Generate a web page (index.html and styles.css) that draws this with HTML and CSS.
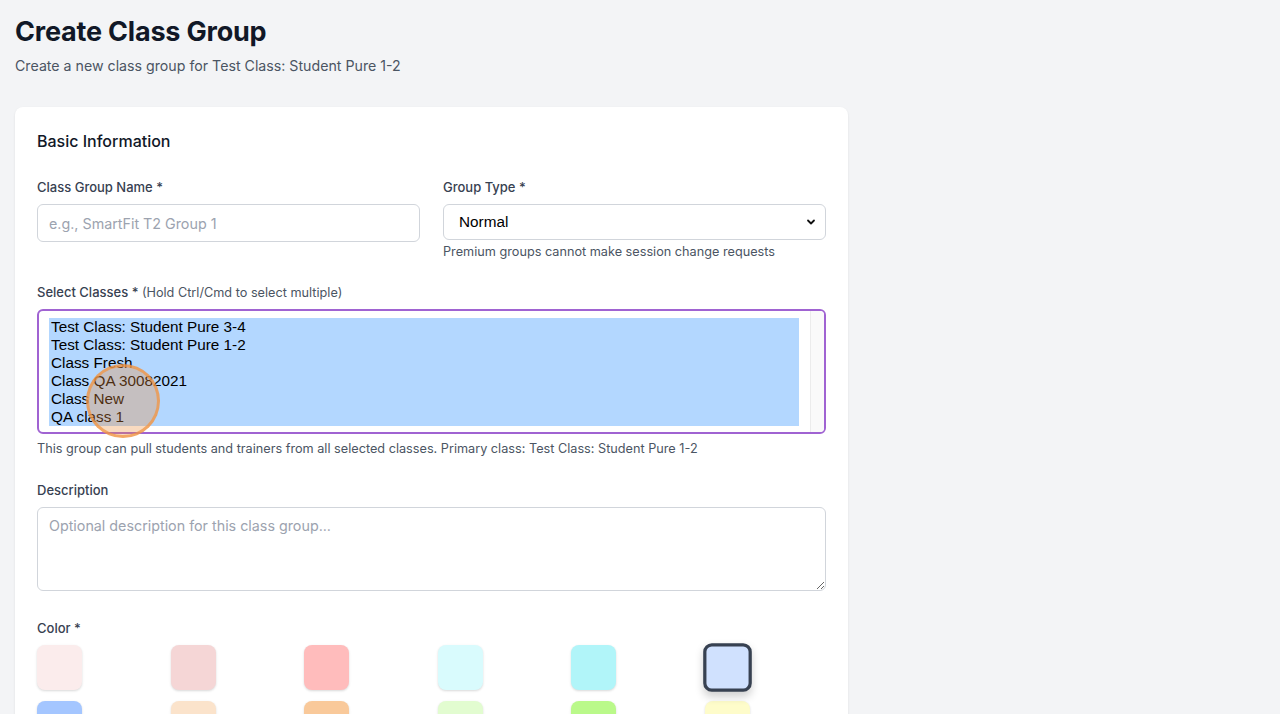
FILE: index.html
```html
<!DOCTYPE html>
<html>
<head>
    <meta name="viewport" content="width=device-width, initial-scale=1">
    <link rel="stylesheet" href="styles.css">
</head>

<body>
    <div class="page">
        <h1 class="page-title">Create Class Group</h1>
        <p class="page-subtitle">Create a new class group for Test Class: Student Pure 1-2</p>

        <div class="card">
            <h2 class="card-title">Basic Information</h2>

            <div class="form-row">
                <div class="field">
                    <label class="field-label" for="group-name">Class Group Name *</label>
                    <input class="text-input" type="text" id="group-name" placeholder="e.g., SmartFit T2 Group 1">
                </div>
                <div class="field">
                    <label class="field-label" for="group-type">Group Type *</label>
                    <div class="select-box" id="group-type">
                        <span>Normal</span>
                        <svg class="chevron" width="12" height="12" viewBox="0 0 12 12">
                            <path d="M3 4.5 L6 7.5 L9 4.5" fill="none" stroke="#111" stroke-width="1.8" stroke-linecap="round" stroke-linejoin="round"/>
                        </svg>
                    </div>
                    <p class="field-hint">Premium groups cannot make session change requests</p>
                </div>
            </div>

            <div class="field section">
                <label class="field-label">Select Classes * <span class="label-note">(Hold Ctrl/Cmd to select multiple)</span></label>
                <div class="multi-select">
                    <div class="option-list">
                        <div class="option">Test Class: Student Pure 3-4</div>
                        <div class="option">Test Class: Student Pure 1-2</div>
                        <div class="option">Class Fresh</div>
                        <div class="option">Class QA 30082021</div>
                        <div class="option">Class New</div>
                        <div class="option">QA class 1</div>
                    </div>
                    <div class="scroll-track"></div>
                    <div class="click-marker"></div>
                </div>
                <p class="field-hint hint-wide">This group can pull students and trainers from all selected classes. Primary class: Test Class: Student Pure 1-2</p>
            </div>

            <div class="field section section-desc">
                <label class="field-label" for="description">Description</label>
                <textarea class="text-area" id="description" placeholder="Optional description for this class group..."></textarea>
            </div>

            <div class="field section section-color">
                <label class="field-label">Color *</label>
                <div class="swatch-grid">
                    <button class="swatch" style="background: #fbecec"></button>
                    <button class="swatch" style="background: #f5d6d6"></button>
                    <button class="swatch" style="background: #ffbcbc"></button>
                    <button class="swatch" style="background: #d9fbfd"></button>
                    <button class="swatch" style="background: #b1f5f9"></button>
                    <button class="swatch selected" style="background: #d0e1fe"></button>
                    <button class="swatch" style="background: #a4c6ff"></button>
                    <button class="swatch" style="background: #fbe3cb"></button>
                    <button class="swatch" style="background: #f9c99a"></button>
                    <button class="swatch" style="background: #e2fcd0"></button>
                    <button class="swatch" style="background: #baf98a"></button>
                    <button class="swatch" style="background: #fefcca"></button>
                </div>
            </div>
        </div>
    </div>
</body>
</html>
```

FILE: styles.css
```css
* {
    box-sizing: border-box;
}

body {
    margin: 0;
    background: #f3f4f6;
    font-family: 'Inter', 'Noto Sans', sans-serif;
    color: #111827;
}

.page {
    width: 863px;
    padding: 14px 15px 40px;
}

.page-title {
    margin: 0;
    font-size: 27px;
    line-height: 36px;
    font-weight: 700;
    letter-spacing: -0.2px;
}

.page-subtitle {
    margin: 6px 0 0;
    font-size: 14.2px;
    line-height: 20px;
    color: #4b5563;
}

.card {
    margin-top: 31px;
    background: #fff;
    border-radius: 8px;
    box-shadow: 0 1px 3px rgba(0,0,0,0.06), 0 1px 2px rgba(0,0,0,0.04);
    padding: 22px 22px 40px;
}

.card-title {
    margin: 0;
    font-size: 16px;
    line-height: 24px;
    font-weight: 500;
}

.form-row {
    display: grid;
    grid-template-columns: 1fr 1fr;
    gap: 23px;
    margin-top: 24px;
}

.field {
    display: flex;
    flex-direction: column;
}

.section {
    margin-top: 22px;
}

.section-desc {
    margin-top: 23px;
}

.section-color {
    margin-top: 27px;
}

.field-label {
    height: 20px;
    font-size: 13px;
    line-height: 20px;
    font-weight: 500;
    color: #374151;
    margin-bottom: 7px;
}

.label-note {
    font-weight: 400;
    font-size: 12.7px;
    line-height: 1;
    color: #4b5563;
}

.text-input {
    height: 38px;
    border: 1px solid #d1d5db;
    border-radius: 6px;
    padding: 0 11px;
    font-family: inherit;
    font-size: 14.3px;
    color: #111827;
}

.text-input::placeholder,
.text-area::placeholder {
    color: #9ca3af;
}

.select-box {
    height: 36px;
    border: 1px solid #d1d5db;
    border-radius: 6px;
    padding: 0 8px 0 15px;
    display: flex;
    align-items: center;
    justify-content: space-between;
    font-family: 'Liberation Sans', Arial, sans-serif;
    font-size: 15.3px;
    color: #000;
}

.field-hint {
    margin: 4px 0 0;
    font-size: 12.7px;
    line-height: 16px;
    color: #4b5563;
}

.hint-wide {
    margin-top: 7px;
}

/* multi select with all options highlighted */
.multi-select {
    position: relative;
    height: 125px;
    border: 2px solid #a063d2;
    border-radius: 6px;
    display: flex;
    padding: 7px 0 0 10px;
}

.option-list {
    flex: 1;
    align-self: flex-start;
    background: #b3d7ff;
    padding-left: 2px;
    margin-right: 11px;
    font-family: 'Liberation Sans', Arial, sans-serif;
    font-size: 15.3px;
    line-height: 18px;
    color: #000;
}

.scroll-track {
    width: 14px;
    margin-top: -7px;
    border-left: 1px solid #ececec;
    background: #fafafa;
    border-radius: 0 4px 4px 0;
}

.click-marker {
    position: absolute;
    left: 47px;
    top: 53px;
    width: 74px;
    height: 74px;
    border-radius: 50%;
    background: rgba(235, 140, 60, 0.32);
    border: 3px solid rgba(240, 150, 70, 0.75);
}

.text-area {
    display: block;
    height: 84px;
    border: 1px solid #d1d5db;
    border-radius: 6px;
    padding: 9px 11px;
    font-family: inherit;
    font-size: 14.3px;
    resize: vertical;
}

.swatch-grid {
    display: grid;
    grid-template-columns: repeat(6, 1fr);
    gap: 11px 12px;
}

.swatch {
    width: 45px;
    height: 45px;
    border: none;
    border-radius: 8px;
    box-shadow: 0 1px 3px rgba(0,0,0,0.1), 0 1px 2px rgba(0,0,0,0.06);
    cursor: pointer;
}

.swatch.selected {
    border: 3px solid #374151;
    transform: scale(1.08);
    box-shadow: 0 4px 8px rgba(0,0,0,0.18);
}
```
